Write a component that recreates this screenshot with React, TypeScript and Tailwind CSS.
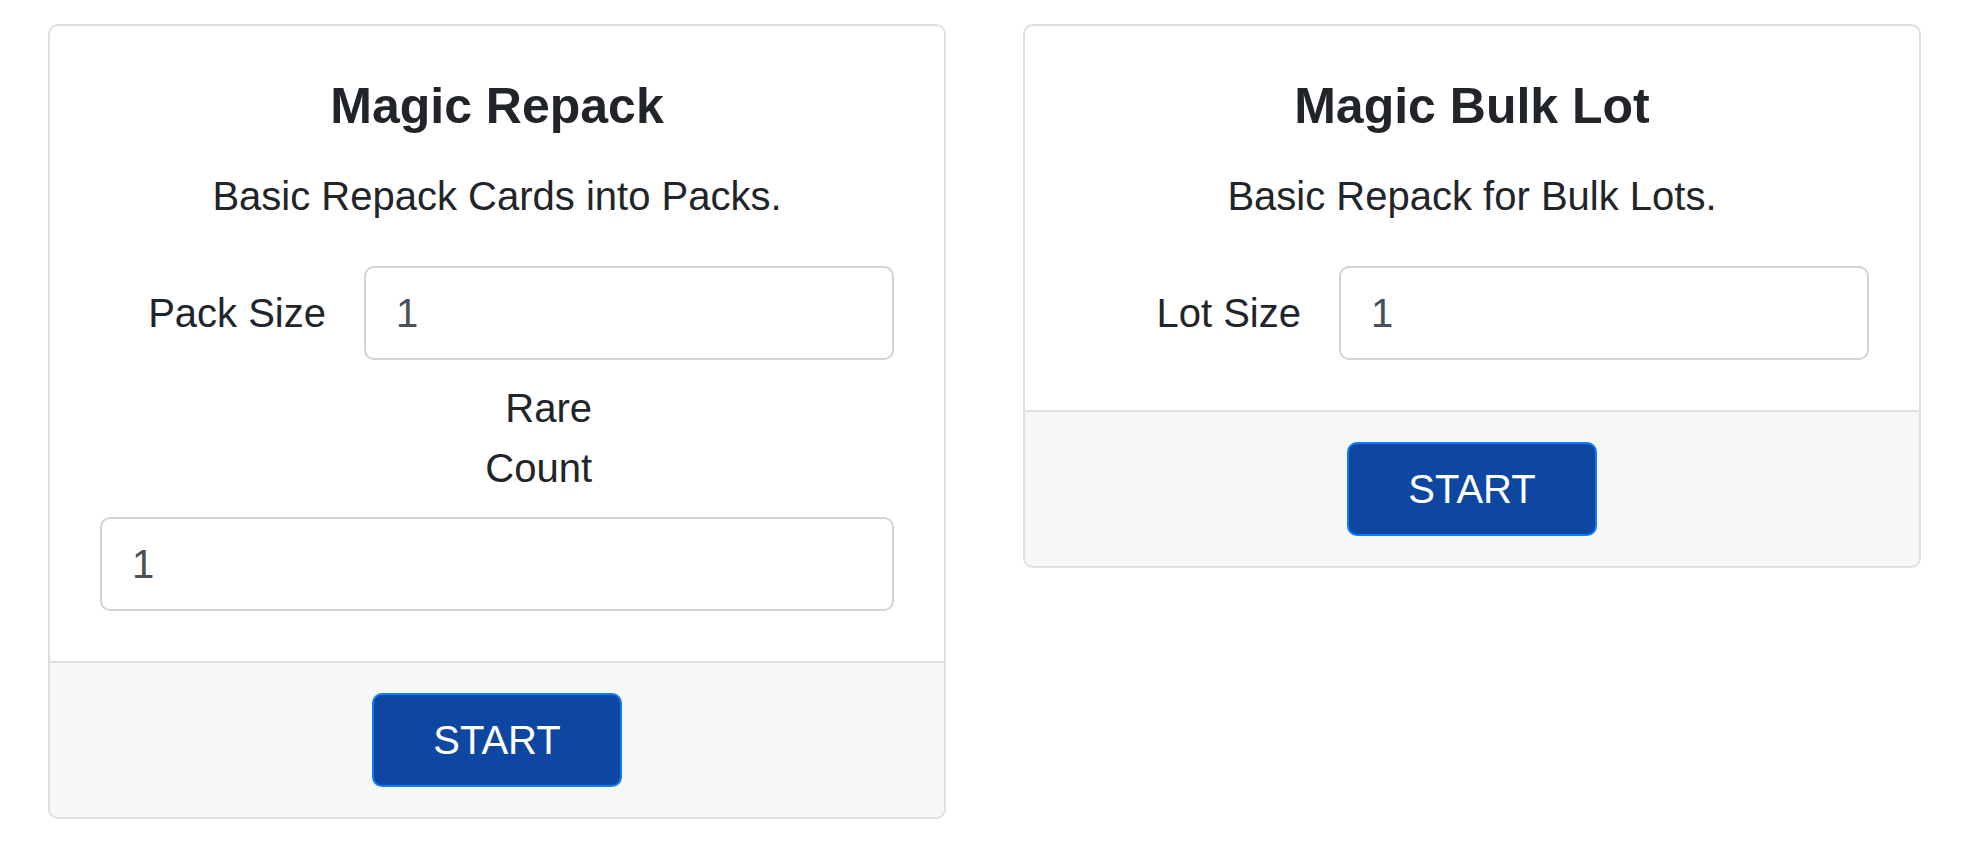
import { ReactNode } from 'react';

function Field({ value }: { value: string }) {
  return (
    <input
      type="text"
      defaultValue={value}
      className="block w-full h-[94px] px-[30px] border-2 border-[#ced4da] rounded-[10px] bg-white text-[40px] text-[#495057] outline-none"
    />
  );
}

function Card({ title, text, children }: { title: string; text: string; children: ReactNode }) {
  return (
    <div className="w-[898px] flex flex-col border-2 border-[#dfdfdf] rounded-[10px] overflow-hidden bg-white">
      <div className="p-[50px] text-center">
        <h5 className="text-[50px] leading-[60px] font-bold text-[#212529] mb-[30px]">{title}</h5>
        <p className="text-[40px] leading-[60px] text-[#212529] mb-[40px]">{text}</p>
        {children}
      </div>
      {/* footer with start button */}
      <div className="border-t-2 border-[#dfdfdf] bg-[#f7f7f7] py-[30px] flex justify-center">
        <button className="w-[250px] h-[94px] flex items-center justify-center border-2 border-[#0b7bff] bg-[#0e47a1] rounded-[10px] text-white text-[40px]">
          START
        </button>
      </div>
    </div>
  );
}

function LabeledRow({ label, value }: { label: string; value: string }) {
  return (
    <div className="flex items-start">
      <label className="w-[264px] shrink-0 pr-[38px] pt-[17px] text-right text-[40px] leading-[60px] text-[#212529]">
        {label}
      </label>
      <div className="flex-1">
        <Field value={value} />
      </div>
    </div>
  );
}

export default function App() {
  return (
    <div
      className="min-h-screen bg-white pt-[24px] pl-[48px]"
      style={{ fontFamily: '"Liberation Sans", Arial, sans-serif' }}
    >
      <div className="flex items-start gap-[77px]">
        <Card title="Magic Repack" text="Basic Repack Cards into Packs.">
          <LabeledRow label="Pack Size" value="1" />
          <div className="w-[160px] ml-[332px] pt-[18px] pb-[19px] text-right text-[40px] leading-[60px] text-[#212529]">
            Rare Count
          </div>
          <Field value="1" />
        </Card>

        <Card title="Magic Bulk Lot" text="Basic Repack for Bulk Lots.">
          <LabeledRow label="Lot Size" value="1" />
        </Card>
      </div>
    </div>
  );
}
